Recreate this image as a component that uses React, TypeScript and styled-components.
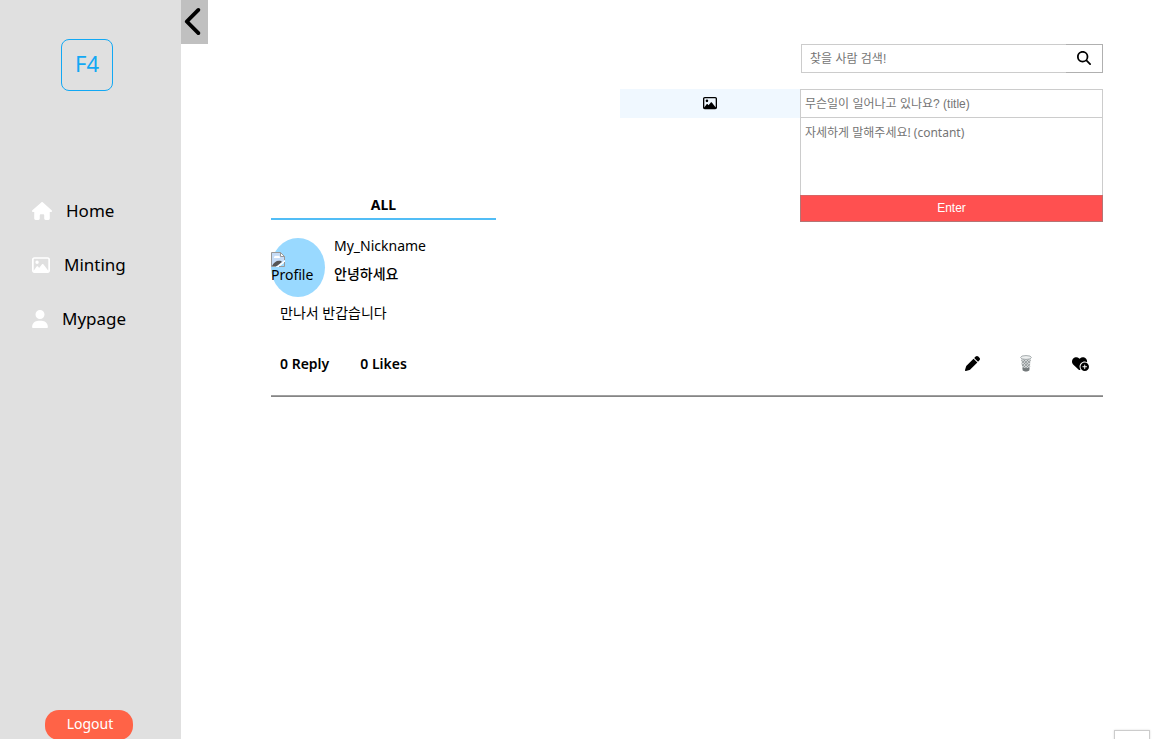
import React from 'react';
import styled, { createGlobalStyle } from 'styled-components';
import {
  FaChevronLeft,
  FaHeartCirclePlus,
  FaHouse,
  FaMagnifyingGlass,
  FaPen,
  FaRegImage,
  FaUser,
} from 'react-icons/fa6';

const GlobalStyle = createGlobalStyle`
  *, *::before, *::after { box-sizing: border-box; }
  body {
    margin: 0;
    background: #fff;
    color: #000;
    font-family: "Noto Sans", "Noto Sans CJK KR", sans-serif;
    font-size: 14px;
    line-height: 20px;
  }
  button {
    padding: 0;
    border: 0;
    background: none;
    color: inherit;
    font: inherit;
    cursor: pointer;
  }
`;

const Page = styled.div`
  display: flex;
  align-items: flex-start;
  height: 100vh;
  overflow: hidden;
`;

const Sidebar = styled.aside`
  display: flex;
  flex-direction: column;
  flex: none;
  width: 181px;
  height: 100%;
  padding-top: 39px;
  background: #e0e0e0;
`;

const Logo = styled.a`
  display: flex;
  align-items: center;
  justify-content: center;
  width: 52px;
  height: 52px;
  margin-left: 61px;
  padding-bottom: 4px;
  border: 1px solid #12a8f4;
  border-radius: 8px;
  color: #12a8f4;
  font-size: 22px;
  text-decoration: none;
`;

const Nav = styled.nav`
  display: flex;
  flex-direction: column;
  gap: 30px;
  margin-top: 108px;
  padding-left: 32px;
`;

const NavLink = styled.a<{ $iconWidth: number }>`
  display: flex;
  align-items: center;
  gap: 14px;
  color: #000;
  font-size: 17px;
  line-height: 24px;
  text-decoration: none;

  svg {
    width: ${({ $iconWidth }) => $iconWidth}px;
    height: 18px;
    color: #fff;
  }
`;

const LogoutButton = styled.button`
  flex: none;
  width: 88px;
  height: 30px;
  margin: auto 0 -1px 45px;
  padding: 0 0 2px 2px;
  border-radius: 14px;
  background: #ff6347;
  color: #fff;
`;

const ToggleButton = styled.button`
  display: flex;
  align-items: center;
  justify-content: center;
  flex: none;
  width: 27px;
  height: 44px;
  padding-bottom: 2px;
  background: #c0c0c0;
`;

const Main = styled.main`
  flex: 1;
  min-width: 0;
  padding: 44px 57px 0 63px;
`;

const SearchForm = styled.form`
  display: flex;
  width: 302px;
  height: 29px;
  margin-left: auto;
`;

const SearchInput = styled.input`
  flex: 1;
  min-width: 0;
  padding: 0 8px;
  border: 1px solid #ccc;
  border-right: 0;
  outline: 0;
  font: 12px "Liberation Sans", "Noto Sans CJK KR", sans-serif;
  &::placeholder { color: #757575; }
`;

const SearchButton = styled.button`
  display: flex;
  align-items: center;
  justify-content: center;
  width: 37px;
  padding-bottom: 1px;
  border: 1px solid #b0b0b0;
  border-left: 0;
`;

const Header = styled.div`
  display: flex;
  justify-content: space-between;
  margin-top: 16px;
`;

const Tab = styled.button`
  align-self: flex-end;
  width: 225px;
  margin-bottom: 2px;
  padding-bottom: 3px;
  border-bottom: 2px solid #51bdf6;
  font-weight: 700;
`;

const Composer = styled.form`
  display: flex;
  align-items: flex-start;
`;

const ImageButton = styled.button`
  display: flex;
  align-items: center;
  justify-content: center;
  width: 180px;
  height: 29px;
  padding-bottom: 1px;
  background: #f0f8ff;
`;

const Fields = styled.div`
  display: flex;
  flex-direction: column;
  width: 303px;
`;

const TitleInput = styled.input`
  height: 29px;
  padding: 0 4px;
  border: 1px solid #ccc;
  outline: 0;
  font: 12px "Liberation Sans", "Noto Sans CJK KR", sans-serif;
  &::placeholder { color: #757575; }
`;

const ContentInput = styled.textarea`
  height: 77px;
  padding: 5px 4px;
  border: 1px solid #ccc;
  border-width: 0 1px;
  outline: 0;
  resize: none;
  font: 12px/20px "Noto Sans", "Noto Sans CJK KR", sans-serif;
  &::placeholder { color: #757575; }
`;

const EnterButton = styled.button`
  height: 27px;
  padding-bottom: 1px;
  border: 1px solid #b57474;
  border-top-color: #d96464;
  background: #ff5050;
  color: #fff;
  font: 12px "Liberation Sans", sans-serif;
`;

const Post = styled.article`
  margin-top: 16px;
`;

const PostHeader = styled.header`
  display: flex;
  gap: 9px;
`;

const Avatar = styled.div`
  flex: none;
  width: 54px;
  height: 59px;
  padding-top: 14px;
  border-radius: 50%;
  background: #99d9ff;
  line-height: 16px;

  svg { display: block; }
`;

const Nickname = styled.div`
  line-height: 16px;
`;

const PostTitle = styled.h2`
  margin: 10px 0 0;
  font-size: 14px;
  line-height: 20px;
  font-weight: 500;
`;

const PostBody = styled.p`
  margin: 6px 0 0 9px;
`;

const PostFooter = styled.footer`
  display: flex;
  align-items: center;
  height: 20px;
  margin-top: 31px;
  padding: 0 14px 0 9px;
  font-weight: 600;
`;

const Counts = styled.div`
  display: flex;
  gap: 31px;
  margin-right: auto;
`;

const Actions = styled.div`
  display: flex;
  align-items: center;
  gap: 40px;
  padding-bottom: 2px;

  button { display: flex; }
`;

const Divider = styled.hr`
  height: 2px;
  margin: 21px 0 0;
  border: 0;
  border-top: 1px solid #a0a0a0;
  background: #858585;
`;

const CornerPanel = styled.div`
  position: fixed;
  right: 10px;
  bottom: -27px;
  width: 36px;
  height: 36px;
  border: 1px solid #ccc;
  background: #fff;
  box-shadow: 0 0 2px #ddd;
`;

function BrokenImageIcon() {
  return (
    <svg width="14" height="15" viewBox="0 0 14 15" aria-hidden="true">
      <path d="M.5 14.5V.5h9l4 4v4L6 14.500z" fill="#c6dcf7" />
      <path d="M3 6a2 2 0 0 1 3-2 2 2 0 0 1 3 2z" fill="#fff" />
      <path d="M1 14c2-4 5-6 9-5l1 1-5 4z" fill="#555" />
      <path d="m5 15 9-7v2l-6 5z" fill="#fff" />
      <path d="M9.500.5v4h4z" fill="#fff" stroke="#999" />
      <path d="M5 14.500H.5V.5h9l4 4V8M13.500 10v4.500H8" fill="none" stroke="#999" />
    </svg>
  );
}

function TrashIcon() {
  return (
    <svg width="12" height="17" viewBox="0 0 12 17" aria-hidden="true">
      <path d="M1 3h10l-1.600 12.500Q6 17.500 2.600 15.500z" fill="#d5d8d9" />
      <path d="m1.300 5 7.700 8M3 4l7 7.500M6 4l4 4M1.800 9l5 5M10.700 5 3 13M9 4l-7 7M6 4 1.600 8.500M10 9l-5 5" stroke="#84898b" strokeWidth=".7" />
      <path d="M2.400 12.500Q6 14 9.600 12.500l-.4 3Q6 17.300 2.800 15.500z" fill="#74797b" />
      <ellipse cx="6" cy="2.500" rx="5.400" ry="1.900" fill="#eef0f0" stroke="#a5abad" />
    </svg>
  );
}

const stop = (event: React.FormEvent) => event.preventDefault();

export default function App() {
  return (
    <Page>
      <GlobalStyle />
      <Sidebar>
        <Logo href="#">F4</Logo>
        <Nav>
          <NavLink href="#home" $iconWidth={20}><FaHouse />Home</NavLink>
          <NavLink href="#minting" $iconWidth={18}><FaRegImage />Minting</NavLink>
          <NavLink href="#mypage" $iconWidth={16}><FaUser />Mypage</NavLink>
        </Nav>
        <LogoutButton type="button">Logout</LogoutButton>
      </Sidebar>
      <ToggleButton type="button" aria-label="Collapse menu"><FaChevronLeft size={31} /></ToggleButton>
      <Main>
        <SearchForm onSubmit={stop}>
          <SearchInput aria-label="Search people" placeholder="찾을 사람 검색!" />
          <SearchButton aria-label="Search"><FaMagnifyingGlass size={14} /></SearchButton>
        </SearchForm>
        <Header>
          <Tab type="button">ALL</Tab>
          <Composer onSubmit={stop}>
            <ImageButton type="button" aria-label="Add image"><FaRegImage size={14} /></ImageButton>
            <Fields>
              <TitleInput aria-label="Title" placeholder="무슨일이 일어나고 있나요? (title)" />
              <ContentInput aria-label="Content" placeholder="자세하게 말해주세요! (contant)" />
              <EnterButton>Enter</EnterButton>
            </Fields>
          </Composer>
        </Header>
        <Post>
          <PostHeader>
            <Avatar><BrokenImageIcon />Profile</Avatar>
            <div>
              <Nickname>My_Nickname</Nickname>
              <PostTitle>안녕하세요</PostTitle>
            </div>
          </PostHeader>
          <PostBody>만나서 반갑습니다</PostBody>
          <PostFooter>
            <Counts><span>0 Reply</span><span>0 Likes</span></Counts>
            <Actions>
              <button type="button" aria-label="Edit"><FaPen size={15} /></button>
              <button type="button" aria-label="Delete"><TrashIcon /></button>
              <button type="button" aria-label="Like"><FaHeartCirclePlus size={17} /></button>
            </Actions>
          </PostFooter>
          <Divider />
        </Post>
      </Main>
      <CornerPanel />
    </Page>
  );
}
